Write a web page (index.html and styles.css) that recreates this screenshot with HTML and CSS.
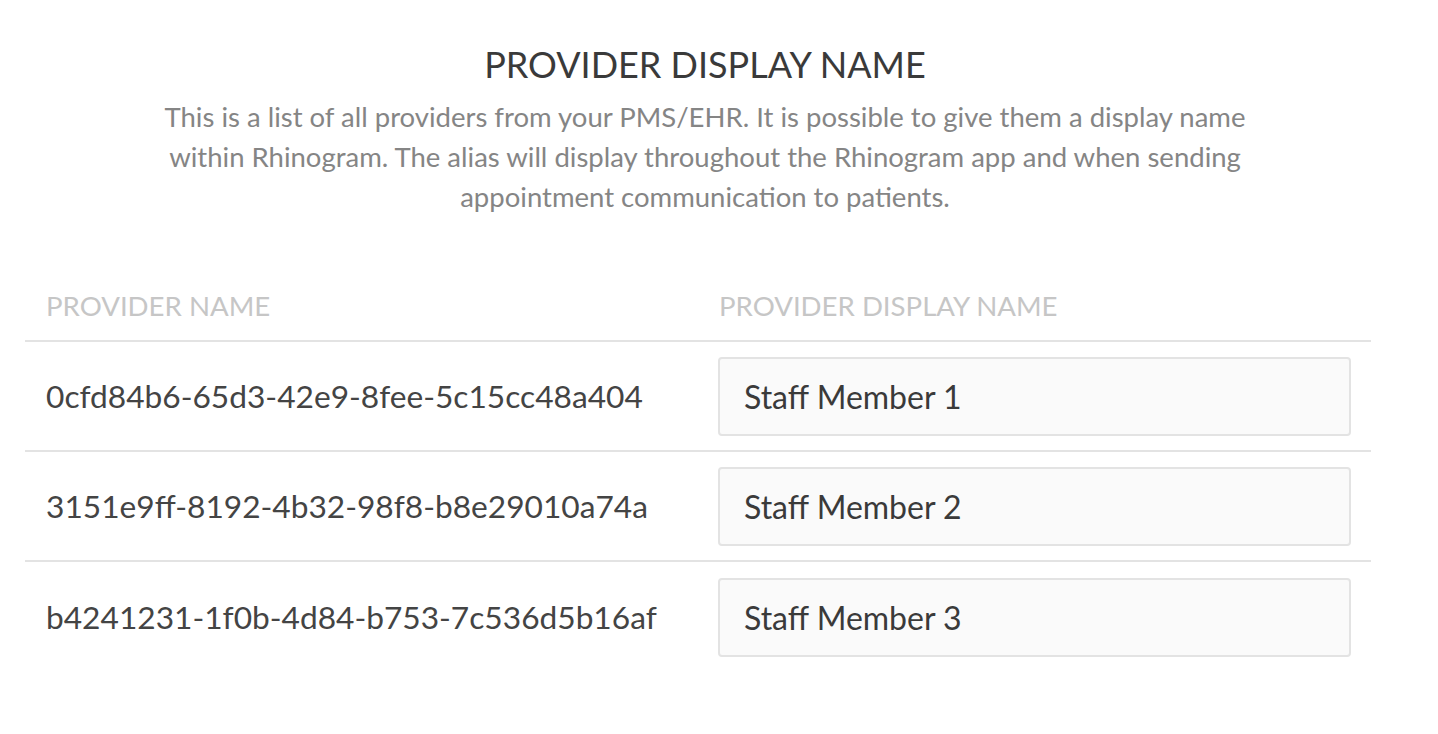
FILE: index.html
```html
<!DOCTYPE html>
<html lang="en">
<head>
<meta charset="utf-8">
<title>Provider Display Name</title>
<link rel="stylesheet" href="styles.css">
</head>
<body>
<main class="page">
  <header class="intro">
    <h1 class="title">PROVIDER DISPLAY NAME</h1>
    <p class="desc">This is a list of all providers from your PMS/EHR. It is possible to give them a display name within Rhinogram. The alias will display throughout the Rhinogram app and when sending appointment communication to patients.</p>
  </header>
  <section class="table">
    <div class="row head">
      <div class="cell c1">PROVIDER NAME</div>
      <div class="cell c2">PROVIDER DISPLAY NAME</div>
    </div>
    <div class="row">
      <div class="cell c1">0cfd84b6-65d3-42e9-8fee-5c15cc48a404</div>
      <div class="cell c2"><input class="field" type="text" value="Staff Member 1"></div>
    </div>
    <div class="row">
      <div class="cell c1">3151e9ff-8192-4b32-98f8-b8e29010a74a</div>
      <div class="cell c2"><input class="field" type="text" value="Staff Member 2"></div>
    </div>
    <div class="row last">
      <div class="cell c1">b4241231-1f0b-4d84-b753-7c536d5b16af</div>
      <div class="cell c2"><input class="field" type="text" value="Staff Member 3"></div>
    </div>
  </section>
</main>
</body>
</html>
```

FILE: styles.css
```css
* { box-sizing: border-box; }
html, body { margin: 0; padding: 0; background: #fff; }
body {
  font-family: Lato, "Open Sans", "Liberation Sans", sans-serif;
  color: #424242;
}
.page {
  width: 1360px;
  margin-left: 25px;
  padding-top: 42px;
}
.intro {
  text-align: center;
  padding: 0 130px;
}
.title {
  margin: 0;
  font-size: 36px;
  font-weight: 400;
  line-height: 44px;
  color: #3a3a3a;
}
.desc {
  margin: 11px 0 0;
  font-size: 27.5px;
  line-height: 40px;
  color: #858585;
}
.table {
  width: 1346px;
  margin-top: 73px;
}
.row {
  display: grid;
  grid-template-columns: 693px 1fr;
  align-items: center;
  height: 110px;
  border-bottom: 2px solid #e3e3e3;
}
.row.head {
  height: auto;
  padding-bottom: 18px;
  align-items: end;
}
.row.last { border-bottom: none; }
.cell { line-height: 32px; }
.cell.c1 { padding-left: 21px; font-size: 31.7px; color: #444; }
.cell.c2 { padding-right: 20px; font-size: 32px; }
.head .cell {
  font-size: 27.6px;
  color: #c6c6c6;
}
.head .cell.c2 { padding-left: 1px; }
.field {
  display: block;
  width: 100%;
  height: 79px;
  border: 2px solid #e3e3e3;
  border-radius: 4px;
  background: #fafafa;
  padding: 0 24px;
  font-family: Lato, "Open Sans", "Liberation Sans", sans-serif;
  font-size: 32px;
  color: #3a3a3a;
  outline: none;
}
```
